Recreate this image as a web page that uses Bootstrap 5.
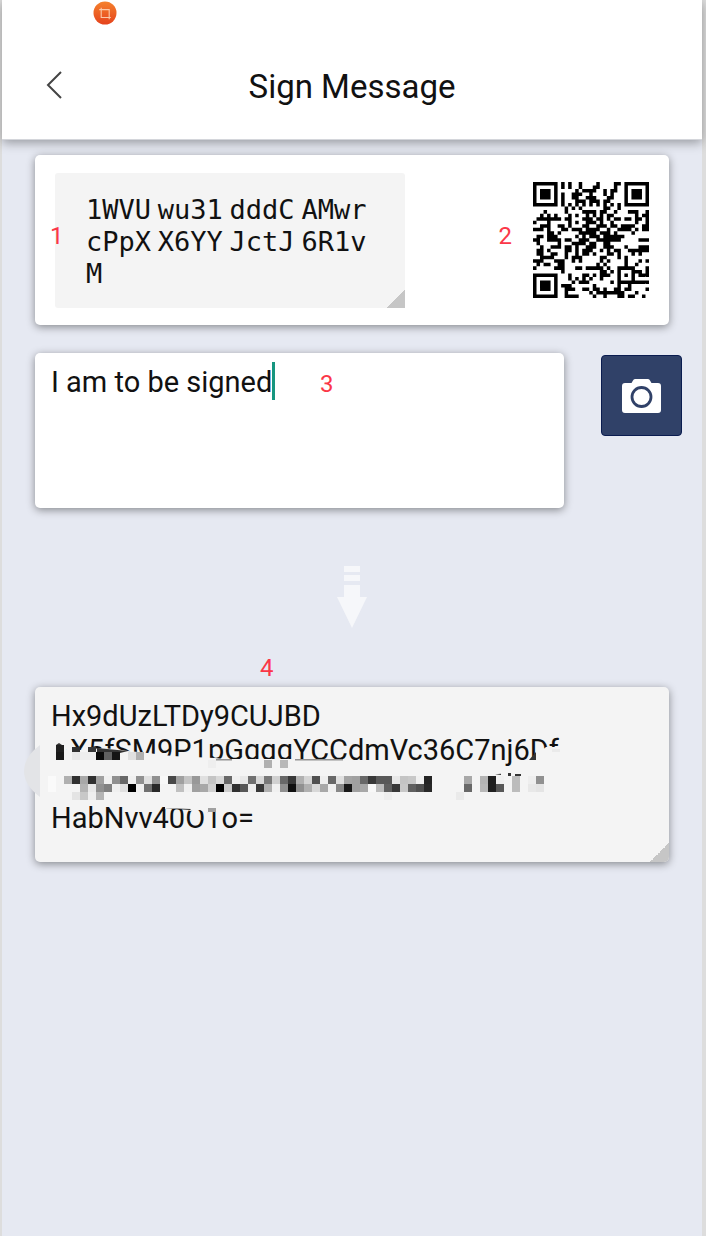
<!DOCTYPE html>
<html lang="en">
<head>
<meta charset="utf-8">
<meta name="viewport" content="width=device-width, initial-scale=1">
<title>Sign Message</title>
<link href="https://cdn.jsdelivr.net/npm/bootstrap@5.3.0/dist/css/bootstrap.min.css" rel="stylesheet">
<style>
  body { font-family: Roboto, "Liberation Sans", sans-serif; background: #e6e9f2; color: #111; }
  .screen { border-left: 2px solid #ddd; border-right: 4px solid #ddd; }
  .topbar { height: 140px; padding: 34px 32px 0; background: #fff; border-bottom: 1px solid #d4d6db; box-shadow: 0 3px 10px rgba(0,0,0,.34); }
  .topbar h1 { font-size: 33px; line-height: 40px; }
  .crop-badge { left: 91px; top: 1px; }
  .back { left: 32px; top: 62px; }
  .content { padding: 15px 33px 40px; }
  .panel { border-radius: 5px; box-shadow: 0 2px 8px rgba(0,0,0,.42); }
  .address-panel { padding: 17px 20px; min-height: 170px; }
  .address { flex: 0 0 59%; min-height: 135px; padding: 20px 0 19px 31px; background: #f4f4f4; border-radius: 3px; font: 26px/32px "Noto Sans", sans-serif; }
  .address span { font: 27px/16px "DejaVu Sans Mono", monospace; }
  .fold { position: absolute; right: 0; bottom: 0; width: 19px; height: 19px; background: linear-gradient(135deg, transparent 50%, #c6c6c6 50%); }
  .compose { margin: 28px -13px 0 0; gap: 37px; }
  .message { height: 155px; padding: 12px 16px; font-size: 29px; line-height: 34px; color: #111; border: 0; resize: none; background: #fff; outline: 0; }
  .caret { left: 237px; top: 9px; width: 3px; height: 38px; background: #16967f; }
  .scan { width: 81px; height: 81px; margin-top: 2px; background: #304168; border: 1px solid #0a1c50; border-radius: 4px; }
  .arrow { margin: 57px 0 58px; }
  .signature { padding: 12px 16px 26px; min-height: 175px; background: #f4f4f4; font-size: 29px; line-height: 34px; }
  .signature .fold { border-bottom-right-radius: 5px; }
  .mosaic { left: -12px; top: 0; }
  .pin { position: absolute; color: #fb3748; font-size: 24px; line-height: 28px; }
  .pin-1 { left: 15px; top: 67px; }
  .pin-2 { right: 157px; top: 67px; }
  .pin-3 { left: 285px; top: 17px; }
  .pin-4 { left: 225px; top: -33px; }
</style>
</head>
<body>
<div class="screen min-vh-100">
  <header class="topbar position-relative d-flex align-items-center justify-content-center">
    <svg class="crop-badge position-absolute" width="24" height="24" viewBox="0 0 24 24" aria-hidden="true">
      <defs><linearGradient id="flame" x1="0" y1="0" x2="0" y2="1"><stop offset="0" stop-color="#f5812c"/><stop offset="1" stop-color="#e5431d"/></linearGradient></defs>
      <circle cx="12" cy="12" r="11.5" fill="url(#flame)"/>
      <path d="M8.200 6.800v9.700h9.600M6.200 8.600h10v9.700" fill="none" stroke="#fbc9a8" stroke-width="1.1"/>
    </svg>
    <button type="button" class="back btn p-2 border-0 position-absolute" aria-label="Back">
      <svg class="d-block" width="24" height="30" viewBox="0 0 24 30"><path d="M19 2L6 15L19 28" fill="none" stroke="#444" stroke-width="2"/></svg>
    </button>
    <h1 class="m-0 fw-normal">Sign Message</h1>
  </header>

  <main class="content">
    <section class="address-panel panel bg-white position-relative d-flex align-items-center justify-content-between">
      <div class="address position-relative"><span>1WVU</span> <span>wu31</span> <span>dddC</span> <span>AMwr</span><br><span>cPpX</span> <span>X6YY</span> <span>JctJ</span> <span>6R1v</span><br><span>M</span><i class="fold"></i></div>
      <svg id="qr" width="116" height="116" viewBox="0 0 33 33" role="img" aria-label="Address QR code"><path fill="#000"/></svg>
      <span class="pin pin-1">1</span>
      <span class="pin pin-2">2</span>
    </section>

    <section class="compose d-flex align-items-start">
      <div class="position-relative flex-grow-1">
        <textarea class="message panel d-block w-100" aria-label="Message" spellcheck="false">I am to be signed</textarea>
        <span class="caret position-absolute"></span>
        <span class="pin pin-3">3</span>
      </div>
      <button type="button" class="scan btn p-0 flex-shrink-0 d-flex align-items-center justify-content-center" aria-label="Scan with camera">
        <svg width="39" height="34" viewBox="0 0 39 34"><path d="M13 0h13q1.500 0 2 1.500L29.500 4H36q3 0 3 3v24q0 3-3 3H3q-3 0-3-3V7q0-3 3-3h6.500L11 1.500Q11.500 0 13 0z" fill="#fff"/><circle cx="19.500" cy="18" r="9.500" fill="#fff" stroke="#304168" stroke-width="2.800"/></svg>
      </button>
    </section>

    <div class="arrow d-flex justify-content-center">
      <svg width="30" height="64" viewBox="0 0 30 64" aria-hidden="true"><path d="M7 1h16v6H7zM7 10h16v6H7zM7 20h16v12h7L15 63 0 32h7z" fill="#f6f7fa"/></svg>
    </div>

    <section class="signature panel position-relative">
      <div>Hx9dUzLTDy9CUJBD</div>
      <div>AX5fSM9P1pGgqqYCCdmVc36C7nj6Df</div>
      <div>&nbsp;</div>
      <div>HabNvv40O1o=</div>
      <svg id="mosaic" class="mosaic position-absolute" width="560" height="175" viewBox="23 687 560 175" aria-hidden="true">
        <path d="M40 745Q24 757 24 771T40 797z" fill="#e3e4e7"/>
        <path d="M50 736H66V750H88L104 748L128 751L148 753L172 756L215 758L224 759H345V770H50z" fill="#f4f4f4"/>
        <path d="M529 762L537 752H540L546 747H560V768H529z" fill="#f4f4f4"/>
        <path d="M165 800H245V809H218V812H204L200 810L190 811L186 809H165z" fill="#f4f4f4"/>
        <path d="M97 748L128 751L120 753H97zM529 760L536 752V760zM56 745l3-2 3 2zM216 759.500h16v.8h-16zM295 759.500h48v.8h-48zM163 808l28 1-1 .9zM495 774.200l6-.5v1.200zM508 773h3v3h-3zM515 774h6v2h-6z" fill="#333"/>
      </svg>
      <i class="fold"></i>
      <span class="pin pin-4">4</span>
    </section>
  </main>
</div>

<script src="https://cdn.jsdelivr.net/npm/bootstrap@5.3.0/dist/js/bootstrap.bundle.min.js"></script>
<script>
  // One string per QR row, 1 = dark module
  const modules = [
    '111111101010010000100001101111111',
    '100000101010010001100001001000001',
    '101110100000101111001011001011101',
    '101110101001110010001010001011101',
    '101110101001100111000110001011101',
    '100000101000111011101100001000001',
    '111111101010101010101010101111111',
    '000000000101010000001100100000000',
    '000100000100001111011001000111001',
    '001010100010100101010110000001011',
    '011111110110001110110101101101101',
    '100010000010100111010010000001001',
    '001110011010001100111011011110011',
    '111010001101110111100100111101011',
    '000011010000011111011101000010000',
    '011011100000101011101111110000000',
    '110011110110011100111111100000111',
    '010000010001111011001100000000000',
    '001001110110100111001110001000111',
    '011010000110101110010101100111111',
    '011001100100101101000110100010100',
    '001111000101110000011000101000000',
    '111000111001010000010100001000101',
    '010110011000000000101000001001000',
    '100000111000110111110100111110001',
    '000000001000000000011010100011101',
    '111111100010001101011100101010111',
    '100000100010101010010000100010000',
    '101110100001011100000010111111111',
    '101110101110000001000000100100000',
    '101110100111001101101001101100001',
    '100000100100000010111111110001000',
    '111111100111100001001000110110010'
  ];
  document.querySelector('#qr path').setAttribute('d', modules.map((row, y) =>
    [...row].map((m, x) => m === '1' ? `M${x} ${y}h1v1h-1z` : '').join('')).join(''));

  // Grey level (hex pair) for each 8px tile, by row; '..' leaves a gap
  const tiles = [
    [56, 745, 7, '20'],
    [72, 747, 5, '30 .. 38'],
    [56, 752, 8, '1a .. e8 ee ee 0a 60 14 .. e0 b0'],
    [208, 760, 8, 'ee .. .. .. .. .. .. b0 .. b8'],
    [64, 776, 8, 'b0 30 a8 30 a0 f0 90 68 f0 90 e0 90 f8 48 a0 c4 98 e0 c4 d8 68 f0 e8 70 d8 78 d0 68 38 b0 d4 50 ee 68 e0 a4 a0 68 38 58 58 e8 c4 c8 f0 24 .. .. .. .. a8 .. b4 20 f0 .. bc .. ee 90'],
    [80, 784, 8, 'b4 e8 90 80 f0 e0 00 f0 70 28 .. f4 c0 f0 a0 a8 d0 00 cc 30 58 ee 38 b0 f0 90 10 90 b0 d8 a8 f0 88 18 a0 a8 f8 bc 60 38 c8 60 50 28 .. .. .. .. 68 .. b8 20 58 .. bc .. e8 e4'],
    [72, 792, 8, 'e4 c8 ee b4'],
    [384, 792, 8, 'ee .. .. .. .. .. .. .. .. ea'],
    [208, 808, 4, 'a0'],
    [552, 749, 3, 'ea'],
    [48, 776, 16, 'fa']
  ];
  const mosaic = document.getElementById('mosaic');
  for (const [left, top, height, row] of tiles) {
    row.split(' ').forEach((g, i) => {
      if (g === '..') return;
      const r = document.createElementNS('http://www.w3.org/2000/svg', 'rect');
      r.setAttribute('x', left + i * 8);
      r.setAttribute('y', top);
      r.setAttribute('width', 8);
      r.setAttribute('height', height);
      r.setAttribute('fill', '#' + g + g + g);
      mosaic.appendChild(r);
    });
  }
</script>
</body>
</html>
